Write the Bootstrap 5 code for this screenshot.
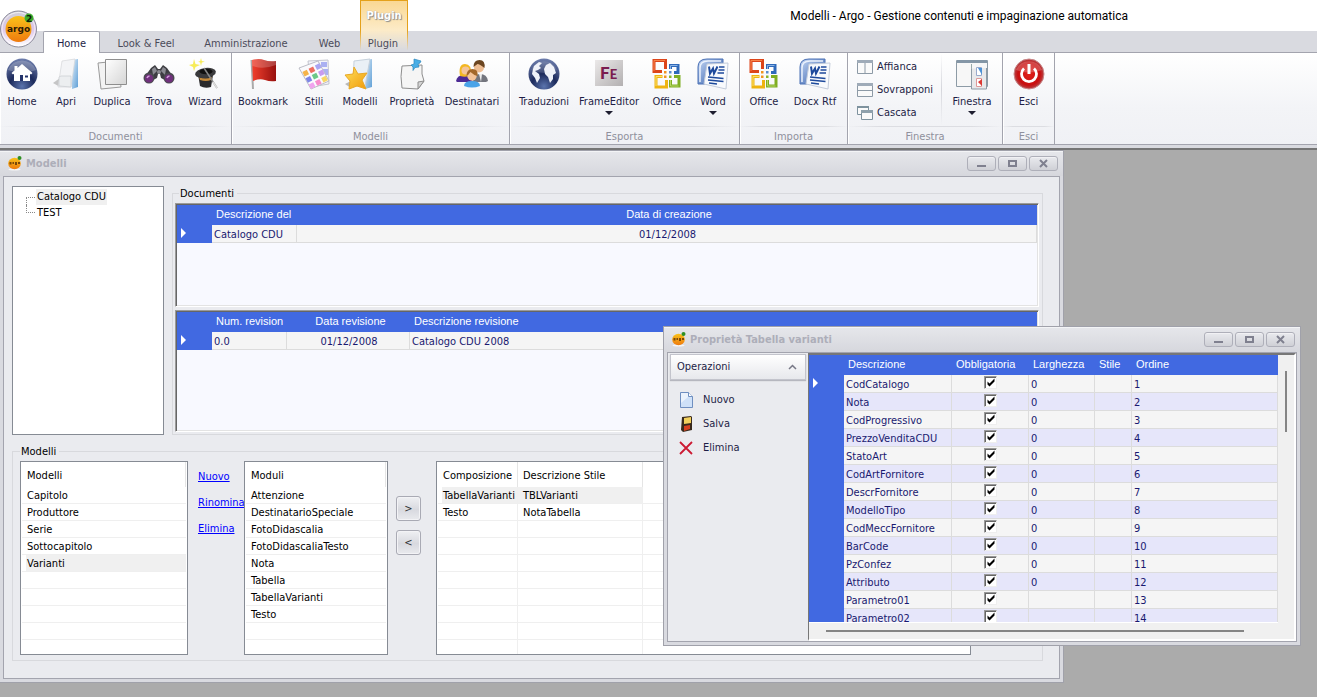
<!DOCTYPE html>
<html lang="it">
<head>
<meta charset="utf-8">
<meta name="viewport" content="width=device-width, initial-scale=1">
<title>Modelli - Argo - Gestione contenuti e impaginazione automatica</title>
<link href="https://cdn.jsdelivr.net/npm/bootstrap@5.3.0/dist/css/bootstrap.min.css" rel="stylesheet">
<style>
  :root { --ui: "DejaVu Sans Condensed", "DejaVu Sans", sans-serif; --line: #a3a4ae; --face: #eaebef; --chrome: #d9dae0; --royal: #4169e1; }
  body { font-family: var(--ui); font-size: 11px; line-height: 14px; color: #000; background: #ababab; }
  svg { display: block; flex: none; }

  /* title bar and tabs */
  .app-title { height: 31px; font-family: Roboto, sans-serif; font-size: 12px; background: #fff; }
  .app-title span { margin-right: 189px; padding-top: 1px; }
  .orb { position: absolute; left: 0; top: 10px; z-index: 3; border: 0; padding: 0; background: none; }
  .context-cap { position: absolute; left: 360px; top: 0; width: 48px; height: 50px; z-index: 1; border: 1px solid #e4a11b; border-bottom: 0; border-image: linear-gradient(#e4a11b 60%, #e4a11b00) 1; background: linear-gradient(#fad893, #fcebc8 60%, #d9dae000); color: #fff; font-weight: bold; text-shadow: 1px 1px 1px #8a8a8a, 0 0 1px #999; padding-top: 8px; }
  .app-tabs { background: #d9dae0; height: 22px; padding-left: 43px; border-bottom: 1px solid var(--line); }
  .app-tabs .nav-link { position: relative; z-index: 2; padding: 5px 0 2px; border-radius: 2px 2px 0 0; color: #4b4b5a; text-align: center; width: 100px; margin-bottom: -1px; border: 1px solid transparent; border-bottom: 0; }
  .app-tabs .nav-link.active { width: 57px; background: #fff; border-color: var(--line); color: #1e1e46; }
  .app-tabs .tab-m { width: 92px; } .app-tabs .tab-l { width: 108px; } .app-tabs .tab-s { width: 59px; } .app-tabs .tab-p { width: 48px; }

  /* ribbon */
  .ribbon { height: 92px; background: linear-gradient(#fff, #f3f4f7 60%, #f0f1f5); border-bottom: 1px solid var(--line); }
  .rb-group { flex: none; border-right: 1px solid var(--line); box-shadow: inset 1px 0 #fff; }
  .rb-group footer { color: #8f909c; height: 18px; line-height: 19px; text-align: center; border-top: 1px solid; border-image: linear-gradient(90deg, #dcdde200, #dcdde2 20%, #dcdde2 80%, #dcdde200) 1; }
  .g-doc { width: 232px; } .g-mod { width: 278px; } .g-exp { width: 230px; } .g-imp { width: 108px; } .g-win { width: 155px; } .g-out { width: 52px; }
  .rb-btn { flex: none; font: inherit; color: #1e1e46; padding: 5px 0 0; width: 46px; border: 0; border-radius: 0; display: flex; flex-direction: column; align-items: center; gap: 5px; white-space: nowrap; }
  .rb-btn.w44 { width: 44px; } .rb-btn.w48 { width: 48px; } .rb-btn.w54 { width: 54px; } .rb-btn.w60 { width: 60px; } .rb-btn.w70 { width: 70px; }
  .rb-btn .caret { border: 4px solid transparent; border-top-color: #1e1e30; border-bottom: 0; margin-top: -3px; }
  .rb-stack { padding-top: 2px; }
  .rb-row { font: inherit; color: #1e1e46; border: 0; padding: 0 0 0 9px; height: 23px; display: flex; align-items: center; gap: 4px; }
  .rb-sep { width: 1px; margin-left: 8px; background: linear-gradient(#d5d6dc00, #d5d6dc, #d5d6dc00); }

  /* desktop and windows */
  .desktop { background: #ababab; border-top: 2px solid #757575; margin-top: 3px; }
  .frame-strip { background: #d9dae0; }
  .mdi { position: absolute; background: var(--chrome); border: 1px solid #a0a1aa; padding: 0 3px 3px; display: flex; flex-direction: column; }
  .mdi-main { left: -1px; top: 0; width: 1065px; height: 533px; }
  .mdi-tool { left: 663px; top: 176px; width: 638px; height: 320px; }
  .mdi-bar { height: 25px; margin: 0 -3px; padding: 0 5px 0 8px; background: linear-gradient(#e6e7eb, #d6d7dd); box-shadow: inset 0 1px #f3f4f6; }
  .mdi-bar h2 { font-size: 11px; font-weight: bold; line-height: 14px; color: #adaeb9; margin: 0; padding-top: 1px; }
  .cap-set { gap: 2px; }
  .cap-btn { width: 29px; height: 15px; padding: 0; border: 1px solid #aeafb9; border-radius: 3px; background: linear-gradient(#e9eaee, #cfd0d6); display: grid; place-items: center; box-shadow: inset 0 1px #f1f1f4; }
  .mdi-body { border: 1px solid var(--line); background: var(--face); min-height: 0; flex: 1; }
  .pad-main { padding: 9px 16px 0 8px; }

  .tree-box { flex: none; width: 152px; height: 249px; border: 1px solid #868b94; background: #fff; padding: 2px 0 0 13px; margin-right: 8px; }
  .tree-box li { height: 16px; line-height: 16px; display: flex; }
  .tree-box li::before { content: ""; width: 9px; height: 8px; margin-right: 1px; border-bottom: 1px dotted #888; border-left: 1px dotted #888; }
  .tree-box li:first-child::before { border-bottom: 0; border-top: 1px dotted #888; margin-top: 8px; }
  .tree-box a { color: #000; text-decoration: none; padding: 0 1px; white-space: nowrap; }
  .tree-box a.on { background: #f0f0f0; }

  .gbox { border: 1px solid #d8d9dd; min-width: 0; }
  .gbox legend { float: none; width: auto; font-size: 11px; line-height: 13px; margin: 0; padding: 1px 3px 0 1px; }
  .gbox-doc { padding: 3px 3px 1px 2px; }
  .gbox-doc legend { margin-left: 4px; }
  .gbox-mod { padding: 3px 71px 5px 7px; margin-top: 9px; }

  .sunk { border: 1px solid; border-color: #9b9b9b #fff #fff #9b9b9b; box-shadow: inset 1px 1px #666, inset -1px -1px #e3e3e3; padding: 1px; background: #f8f9ff; overflow: hidden; }
  .h-docs { height: 104px; } .h-revs { height: 122px; margin-top: 3px; }
  .grid-t { table-layout: fixed; width: 100%; border-collapse: separate; border-spacing: 0; color: #191970; }
  .grid-t th { background: var(--royal); color: #fff; font-family: "Liberation Sans", sans-serif; font-size: 11px; font-weight: normal; line-height: 16px; padding: 0 0 2px 4px; white-space: nowrap; overflow: hidden; }
  .grid-t thead th { height: 20px; }
  .grid-t td { background: #f5f5f5; height: 18px; line-height: 15px; padding: 2px 0 0 2px; border-right: 1px solid #dcdcdc; border-bottom: 1px solid #dcdcdc; white-space: nowrap; overflow: hidden; }
  .grid-t th.mark-cell { width: 35px; padding: 0 0 2px 4px; }
  .mark-cell i { display: block; width: 0; border: 5px solid transparent; border-left-color: #fff; border-right: 0; }
  .grid-t tr:nth-child(even) td { background: #e6e6fa; }
  .c108 { width: 108px; } .c85 { width: 85px; } .c75 { width: 75px; } .c123 { width: 123px; } .c77 { width: 77px; } .c66 { width: 66px; } .c37 { width: 37px; }

  .list-box { border: 1px solid #868b94; background: #fff; height: 194px; padding: 0 1px; overflow: hidden; }
  .list-box table { width: 100%; table-layout: fixed; border-collapse: separate; border-spacing: 0; }
  .list-box th { height: 25px; font-weight: normal; padding: 3px 0 0 5px; border-right: 1px solid #e5e5e5; white-space: nowrap; }
  .list-box td { height: 17px; line-height: 14px; padding: 2px 0 0 5px; border-bottom: 1px solid #efefef; white-space: nowrap; }
  .list-box tr.on td { background: #f0f0f0; }
  .list-box tr.on td:first-child { box-shadow: inset 4px 0 #fff; }
  .l-models { flex: none; width: 168px; } .l-modules { flex: none; width: 144px; }
  .l-comp td { border-right: 1px solid #efefef; }
  .l-comp td:last-child, .l-comp th:last-child { border-right: 0; }
  .c80 { width: 80px; } .c125 { width: 125px; }
  .cmds { flex: none; width: 46px; margin-left: 10px; padding-top: 3px; }
  .cmds a { color: #00f; line-height: 26px; }
  .moves { flex: none; margin: 35px 15px 0 8px; gap: 9px; }
  .move-btn { width: 25px; height: 25px; padding: 0; font-size: 11px; line-height: 14px; border: 1px solid #a9aab4; border-radius: 3px; background: linear-gradient(#eff0f3, #d8d9df 55%, #e9eaee); color: #333; box-shadow: inset 0 0 0 1px #f3f3f6; }

  .side { flex: none; width: 140px; padding: 1px 2px; }
  .side-head { height: 26px; font: inherit; color: #1e1e46; text-align: left; padding: 0 8px 0 6px; border: 1px solid #c3c4cc; border-radius: 0; background: linear-gradient(#fff, #e7e8ec); box-shadow: 0 1px 1px #b6b7bf; }
  .side-cmd { font: inherit; color: #1e1e46; border: 0; padding: 0 0 0 9px; height: 24px; display: flex; align-items: center; gap: 8px; }
  .side-list { padding-top: 8px; }
  .tool-grid { border: 1px solid; border-color: #777 #fff #fff #777; border-width: 2px 2px 2px 1px; background: #f0f0f0; min-width: 0; }
  .tool-view { height: 268px; overflow: hidden; border-bottom: 1px solid #fff; min-width: 0; }
  .vbar { flex: none; width: 16px; padding: 16px 0 0 7px; } .vbar i { display: block; width: 2px; height: 61px; background: #858585; }
  .hbar { padding: 7px 50px 0 17px; } .hbar i { display: block; height: 2px; background: #858585; }
  .grid-t td.tick-cell { padding: 0; vertical-align: top; }
  .tick { appearance: none; display: block; width: 13px; height: 13px; margin: 1px auto 0; border: 1px solid; border-color: #999 #eee #eee #999; box-shadow: inset 1px 1px #666; background: #fff url("data:image/svg+xml,%3Csvg xmlns='http://www.w3.org/2000/svg' width='11' height='11'%3E%3Cpath d='M2.5 4.5v3l2 2 5-5v-3l-5 5z'/%3E%3C/svg%3E") 0 0 no-repeat; }
</style>
</head>
<body class="vh-100 d-flex flex-column overflow-hidden">

<svg width="0" height="0" class="position-absolute" aria-hidden="true">
  <defs>
    <radialGradient id="gNavy" cx=".5" cy=".9" r=".9"><stop offset="0" stop-color="#5b74ad"/><stop offset=".45" stop-color="#1d2b5c"/><stop offset="1" stop-color="#6f7fae"/></radialGradient>
    <linearGradient id="gOrange" x2="0" y2="1"><stop offset="0" stop-color="#f9c21a"/><stop offset="1" stop-color="#ee7a0e"/></linearGradient>
    <linearGradient id="gPage" x2="1" y2="1"><stop offset="0" stop-color="#fff"/><stop offset="1" stop-color="#d5d5d5"/></linearGradient>
    <linearGradient id="gFolder" x2="1" y2="1"><stop offset="0" stop-color="#dcebf8"/><stop offset="1" stop-color="#5f9fd6"/></linearGradient>
    <linearGradient id="gRed" x2="1" y2="0"><stop offset="0" stop-color="#f2402e"/><stop offset="1" stop-color="#97100e"/></linearGradient>
    <linearGradient id="gWord" x2="1" y2="1"><stop offset="0" stop-color="#c4d7f4"/><stop offset="1" stop-color="#2a56a8"/></linearGradient>
    <linearGradient id="gFe" x2="1" y2="1"><stop offset="0" stop-color="#ebe9e9"/><stop offset="1" stop-color="#b3b0b1"/></linearGradient>
    <linearGradient id="gStar" x2="1" y2="1"><stop offset="0" stop-color="#ffe05a"/><stop offset="1" stop-color="#f09a0a"/></linearGradient>
    <radialGradient id="gStop" cx=".5" cy=".5" r=".5"><stop offset="0" stop-color="#e0211b"/><stop offset=".75" stop-color="#c80f10"/><stop offset="1" stop-color="#b5474a"/></radialGradient>
    <linearGradient id="gOrb" x2="0" y2="1"><stop offset="0" stop-color="#cfcfd8"/><stop offset=".5" stop-color="#dcc6ea"/><stop offset="1" stop-color="#fff"/></linearGradient>
    <symbol id="argo" viewBox="0 0 14 15">
      <ellipse cx="6.500" cy="13.500" rx="6" ry="1" fill="#f6f6f6"/>
      <ellipse cx="6.500" cy="7.500" rx="6.300" ry="5.800" fill="url(#gOrange)"/><path d="M1.500 6h2v2.500h-2zM4.500 6H6v2H4.500zM7 6h2v3H7zM10 6h2v2h-2z" fill="#5a3206" opacity=".8"/><circle cx="11.500" cy="2" r="2" fill="#2f8f22"/>
    </symbol>
    <symbol id="office" viewBox="0 0 32 32">
      <g fill="none" stroke-width="3">
        <path d="M11 13.500H3V2.500H14.500V11" stroke="#dc451a"/><path d="M19.500 11V7.500H27V14.500H23" stroke="#2f69ba"/>
        <path d="M11.500 18.500H5V29H15.500V22" stroke="#eeb411"/><path d="M19.500 22V28H28V18.500H23" stroke="#7fae22"/>
      </g>
      <path d="M13 13h2.500v2.500H13zM13 17.500h2.500V20H13z" fill="#f0941e"/><path d="M18 13h2.500v2.500H18z" fill="#5b8ccc"/><path d="M18 17.500h2.500V20H18z" fill="#8bb52c"/>
      <path d="M3 13V2.500h11" fill="none" stroke="#f7844a"/><path d="M5 28V18.500h6" fill="none" stroke="#fbe06a"/><path d="M19.500 11V7.500h7" fill="none" stroke="#8bb4e6"/><path d="M19.500 22v6h8" fill="none" stroke="#b7d868"/>
    </symbol>
    <symbol id="word" viewBox="0 0 32 32">
      <path d="M1 26V9q0-8 9-8h16v5H13L8 26z" fill="url(#gWord)" stroke="#4a70b5"/>
      <path d="M3 24V10q0-7 8-7h13" fill="none" stroke="#eaf1fc" stroke-width="1.500"/>
      <path d="M10 6l21-1-2 26L7 26z" fill="#f8fafd" stroke="#c3ccdb"/>
      <path d="M12 8.500l1 7 3-5 1 5 3.500-7" fill="none" stroke="#1e4a9c" stroke-width="2"/>
      <path d="M22 9h5.500M21.500 12h6M20.500 15h6.500M11 19l15.500 1.500M11 22l15.500 1.500M12 25l8 1" stroke="#1e4a9c" stroke-width="1.600"/>
    </symbol>
  </defs>
</svg>

<header class="position-relative">
  <div class="app-title d-flex align-items-center justify-content-end"><span>Modelli - Argo - Gestione contenuti e impaginazione automatica</span></div>
  <button class="orb" type="button" aria-label="Menu Argo">
    <svg width="38" height="38" viewBox="0 0 38 38">
      <circle cx="18.500" cy="19" r="18" fill="url(#gOrb)" stroke="#8d8d9c"/><circle cx="18.500" cy="19" r="16.500" fill="none" stroke="#fff" opacity=".7"/>
      <circle cx="18.500" cy="19" r="13" fill="url(#gOrange)"/>
      <text x="7" y="22" font-family="DejaVu Sans" font-weight="bold" font-size="9" fill="#2b1a05">argo</text>
      <circle cx="29" cy="8" r="4.500" fill="#3fae2a"/><text x="26" y="11.500" font-family="DejaVu Sans" font-weight="bold" font-size="9" fill="#11200b">2</text>
    </svg>
  </button>
  <div class="context-cap text-center">Plugin</div>
  <nav class="app-tabs nav nav-tabs" aria-label="Schede">
    <a class="nav-link active" href="#" aria-current="page">Home</a>
    <a class="nav-link tab-m" href="#">Look &amp; Feel</a>
    <a class="nav-link tab-l" href="#">Amministrazione</a>
    <a class="nav-link tab-s" href="#">Web</a>
    <a class="nav-link tab-p" href="#">Plugin</a>
  </nav>
</header>

<div class="ribbon d-flex" role="toolbar" aria-label="Home">
  <section class="rb-group g-doc d-flex flex-column">
    <div class="d-flex flex-fill">
      <button type="button" class="btn rb-btn w44"><svg width="32" height="32"><circle cx="16" cy="16" r="15.500" fill="url(#gNavy)"/><path d="M2 12A15 15 0 0 1 30 12Q16 18 2 12z" fill="#fff" opacity=".22"/><path d="M16 6l10.500 9-1.500 1.500-1-.8V23H8v-7.300l-1 .8L5.500 15l3-2.600V8h3v2z" fill="#fff"/><path d="M14 17h3v6h-3z" fill="#24346b"/><path d="M19 17.500h3v2h-3z" fill="#24346b"/></svg><span>Home</span></button>
      <button type="button" class="btn rb-btn w44"><svg width="32" height="32"><path d="M3 25l7-5v9z" fill="#777" opacity=".4"/><path d="M22 2l6-1v28l-6 2z" fill="url(#gFolder)"/><path d="M12 3l13-2-4 28H8z" fill="#f3f4f6" stroke="#d5d7da" stroke-width=".7"/><path d="M9 19l2-1h10v11L9 28z" fill="#eceef0" stroke="#c9cbd0" stroke-width=".7"/></svg><span>Apri</span></button>
      <button type="button" class="btn rb-btn w48"><svg width="32" height="32"><path d="M2 5l20-2 3 26-20 2z" fill="#f3f3f3" stroke="#9a9a9a"/><path d="M9.500 1.500h21v25h-21z" fill="url(#gPage)" stroke="#8e8e8e"/></svg><span>Duplica</span></button>
      <button type="button" class="btn rb-btn"><svg width="32" height="32"><path d="M8 10l4-3 3 4h2l3-4 4 3 5 7-5 6-6-3-1-4h-2l-1 4-6 3-5-6z" fill="#3d3d42"/><path d="M9 11l3-2 2 4-4 4zM23 11l-3-2-2 4 4 4z" fill="#8b8b93"/><circle cx="6" cy="20" r="5.500" fill="#4a4a50"/><circle cx="26" cy="20" r="5.500" fill="#4a4a50"/><circle cx="6" cy="20.500" r="4" fill="#70307c"/><circle cx="26" cy="20.500" r="4" fill="#70307c"/><path d="M4 20a3 3 0 0 1 2.500-2M24 20a3 3 0 0 1 2.500-2" stroke="#d09adb" stroke-width="1.500" fill="none"/><circle cx="16" cy="14" r="2" fill="#8b8b92"/></svg><span>Trova</span></button>
      <button type="button" class="btn rb-btn"><svg width="32" height="32"><path d="M9 16l15 1-2 12q-6 2-11-1z" fill="#2a2a2c"/><path d="M10 19q6 3 13 0l-1 3q-5 2-11 0z" fill="#c58a3a"/><ellipse cx="16.500" cy="15" rx="10.500" ry="5" transform="rotate(-8 16 15)" fill="#3a3a3c"/><ellipse cx="17" cy="13.500" rx="6.500" ry="2.800" fill="#111"/><path d="M15 10l13 20" stroke="#888" stroke-width="1.500"/><path d="M24 24l4 6" stroke="#ddd" stroke-width="1.500"/><path d="M5 1l1.500 5L11 7l-4.500 2L5 13 4 9 0 7l4-1zM12 0l.8 3 3 .8-3 .8L12 8l-.8-3.400-2-.8 2-.8z" fill="#f7ec58"/></svg><span>Wizard</span></button>
    </div>
    <footer>Documenti</footer>
  </section>
  <section class="rb-group g-mod d-flex flex-column">
    <div class="d-flex flex-fill ps-1">
      <button type="button" class="btn rb-btn w54"><svg width="32" height="32"><path d="M4.500 2l1.500 29" stroke="#aaa" stroke-width="2"/><path d="M5 2q7-2 12 0t12 1v20q-6 1-11-1t-12 1z" fill="url(#gRed)"/><path d="M5 2q7-2 12 0t12 1v4Q16 12 5.500 8z" fill="#fff" opacity=".2"/></svg><span>Bookmark</span></button>
      <button type="button" class="btn rb-btn w48"><svg width="32" height="32"><path d="M10 3l20-1 1 24-18 3z" fill="#f3f4fa" stroke="#c4c5cf"/><path d="M16 4h5v5h-5zM23 4h6v5h-6zM25 11h5v6h-5z" fill="#aab0f2"/><path d="M1 10L20 3l11 20-18 8z" fill="#fafafd" stroke="#bcbdc6"/><g transform="rotate(-27 16 17)"><path d="M7 9h5v5H7z" fill="#f5b44a"/><path d="M14 9h5v5h-5z" fill="#ee6d60"/><path d="M21 9h5v5h-5z" fill="#a9a5f2"/><path d="M7 16h5v5H7z" fill="#7d86e6"/><path d="M14 16h5v5h-5z" fill="#6cc888"/><path d="M21 16h5v5h-5z" fill="#c79bef"/><path d="M7 23h5v5H7z" fill="#f0a3ee"/><path d="M14 23h5v5h-5z" fill="#f78ccd"/><path d="M21 23h5v5h-5z" fill="#f8d763"/></g></svg><span>Stili</span></button>
      <button type="button" class="btn rb-btn w44"><svg width="32" height="32"><path d="M22 2l6-1v28l-7 2z" fill="url(#gFolder)"/><path d="M10 3l16-2-5 27H9z" fill="#eaf0f6" stroke="#c6d1dc"/><path d="M1 26l6-3v7z" fill="#777" opacity=".5"/><path d="M10 9l4 7 9-1-5 7 4 9-9-3-8 3 1-8-5-6 8-1z" fill="url(#gStar)" stroke="#e9a825"/></svg><span>Modelli</span></button>
      <button type="button" class="btn rb-btn w60"><svg width="32" height="32"><path d="M6 8l20-1q-1 10 2 16l-6 8-16-1Q4 18 6 8z" fill="#f5f5f5" stroke="#8d8d8d"/><path d="M28 23l-6 8v-7z" fill="#d5d5d5" stroke="#8d8d8d"/><path d="M18 1l7 2-1 2-2 1 1 3-4 .5-2 3v-3.500l-2-2 3-1V3z" fill="#49aee6" stroke="#2b87bd" stroke-width=".7"/></svg><span>Proprietà</span></button>
      <button type="button" class="btn rb-btn w60"><svg width="32" height="32"><path d="M0 23q1-6 8-6t9 7H1z" fill="#4c2a95"/><path d="M17 24q0-8 7-8t8 7l-2 1z" fill="#73757e"/><path d="M23 16h3l-1 8z" fill="#eee"/><path d="M4 18q-2-12 5-12t6 11q-5 3-11 1z" fill="#f3b721"/><circle cx="9.500" cy="12.500" r="4" fill="#f4c49a"/><circle cx="23" cy="9.500" r="5" fill="#eebd93"/><path d="M17.500 9q0-7 6-7t5 8q-5-4-7-4z" fill="#6b4520"/><path d="M8 28q0-5 8-5t8 5q-8 3-16 0z" fill="#4aa3e8"/><circle cx="16" cy="18" r="4.700" fill="#f4c49a"/><path d="M10.500 18q0-7 6-7t5 7q-4-1-7-4-2 3-4 4z" fill="#a4682a"/></svg><span>Destinatari</span></button>
    </div>
    <footer>Modelli</footer>
  </section>
  <section class="rb-group g-exp d-flex flex-column">
    <div class="d-flex flex-fill ps-1">
      <button type="button" class="btn rb-btn w60"><svg width="32" height="32"><circle cx="16" cy="16" r="15.500" fill="url(#gNavy)"/><path d="M6 8l5-4 3 1-3 3 2 2-3 2-3 1 4 3 1 4-3 5-2-5-3-4 1-5z" fill="#eef1f8"/><path d="M18 7l4-2 4 4 2 6-3 2v4l-3 4-2-6-3-3-1-5z" fill="#eef1f8"/><path d="M3 12A14 14 0 0 1 29 12Q16 18 3 12z" fill="#fff" opacity=".13"/></svg><span>Traduzioni</span></button>
      <button type="button" class="btn rb-btn w70"><svg width="32" height="32"><path d="M2 2h28v26H2z" fill="url(#gFe)"/><text x="7" y="21" font-family="Lato" font-weight="900" font-size="17" fill="#7b1c4f">F<tspan font-size="13">E</tspan></text></svg><span>FrameEditor</span><i class="caret"></i></button>
      <button type="button" class="btn rb-btn"><svg width="32" height="32"><use href="#office"/></svg><span>Office</span></button>
      <button type="button" class="btn rb-btn"><svg width="32" height="32"><use href="#word"/></svg><span>Word</span><i class="caret"></i></button>
    </div>
    <footer>Esporta</footer>
  </section>
  <section class="rb-group g-imp d-flex flex-column">
    <div class="d-flex flex-fill">
      <button type="button" class="btn rb-btn w48"><svg width="32" height="32"><use href="#office"/></svg><span>Office</span></button>
      <button type="button" class="btn rb-btn w54"><svg width="32" height="32"><use href="#word"/></svg><span>Docx Rtf</span></button>
    </div>
    <footer>Importa</footer>
  </section>
  <section class="rb-group g-win d-flex flex-column">
    <div class="d-flex flex-fill">
      <div class="rb-stack d-flex flex-column">
        <button type="button" class="btn rb-row"><svg width="16" height="16"><path d="M.5 1.500h15v13H.5z" fill="#fafafa" stroke="#8d9aa6"/><path d="M0 1h16v3H0z" fill="#9fabb8"/><path d="M8 4v10" stroke="#8d9aa6"/></svg>Affianca</button>
        <button type="button" class="btn rb-row"><svg width="16" height="16"><path d="M.5 1.500h15v13H.5z" fill="#fafafa" stroke="#8d9aa6"/><path d="M0 1h16v3H0z" fill="#9fabb8"/><path d="M1 8.500h14" stroke="#8d9aa6"/></svg>Sovrapponi</button>
        <button type="button" class="btn rb-row"><svg width="16" height="16"><path d="M.5 1.500h11v8H.5z" fill="#fafafa" stroke="#7e929e"/><path d="M0 1h12v2H0z" fill="#7e929e"/><path d="M4.500 5.500h11v9h-11z" fill="#fafafa" stroke="#7e929e"/><path d="M4 5h12v3H4z" fill="#8fa1ac"/></svg>Cascata</button>
      </div>
      <span class="rb-sep"></span>
      <button type="button" class="btn rb-btn w60"><svg width="32" height="32"><path d="M.5 2.500h31v26H.5z" fill="#f7f7f7" stroke="#8d9ba6"/><path d="M1 2h30v3H1z" fill="#8496a6"/><path d="M15.500 6v23" stroke="#9aa"/><path d="M15.500 10.500V31h15V10" fill="#e8e9eb" stroke="#8d9ba6"/><path d="M20.500 9.500h5v8h-5z" fill="#fff" stroke="#9ac"/><path d="M22 10h4v7z" fill="#4d92d6"/><path d="M20.500 20.500h5v8h-5z" fill="#fff" stroke="#d99"/><path d="M22 24l4-3v7z" fill="#dc3a35"/></svg><span>Finestra</span><i class="caret"></i></button>
    </div>
    <footer>Finestra</footer>
  </section>
  <section class="rb-group g-out d-flex flex-column">
    <div class="d-flex flex-fill justify-content-center">
      <button type="button" class="btn rb-btn"><svg width="32" height="32"><circle cx="16" cy="16" r="15" fill="url(#gStop)" stroke="#c9888a"/><path d="M3 12A14 14 0 0 1 29 12Q16 17 3 12z" fill="#fff" opacity=".22"/><path d="M11 10.500a7.500 7.500 0 1 0 10 0" fill="none" stroke="#fff" stroke-width="2.800"/><path d="M16 6v10" stroke="#fff" stroke-width="3"/></svg><span>Esci</span></button>
    </div>
    <footer>Esci</footer>
  </section>
</div>

<main class="frame-strip flex-fill d-flex">
<div class="desktop position-relative overflow-hidden flex-fill">

  <section class="mdi mdi-main" aria-label="Modelli">
    <div class="mdi-bar d-flex align-items-center">
      <svg width="14" height="15" class="me-1"><use href="#argo"/></svg>
      <h2 class="flex-fill">Modelli</h2>
      <div class="d-flex cap-set">
        <button class="cap-btn" type="button" aria-label="Riduci a icona"><svg width="11" height="9"><path d="M1 6h9v2H1z" fill="#7f808f"/></svg></button>
        <button class="cap-btn" type="button" aria-label="Ingrandisci"><svg width="11" height="9"><path d="M2 2h7v5H2z" fill="none" stroke="#7f808f" stroke-width="2"/></svg></button>
        <button class="cap-btn" type="button" aria-label="Chiudi"><svg width="11" height="9"><path d="M2 1l7 7M9 1L2 8" stroke="#7f808f" stroke-width="2"/></svg></button>
      </div>
    </div>
    <div class="mdi-body pad-main">
      <div class="d-flex">
        <ul class="tree-box list-unstyled mb-0">
          <li><a class="on" href="#">Catalogo CDU</a></li>
          <li><a href="#">TEST</a></li>
        </ul>
        <fieldset class="gbox gbox-doc flex-fill">
          <legend>Documenti</legend>
          <div class="sunk h-docs">
            <table class="grid-t">
              <thead><tr><th class="mark-cell"></th><th class="c85">Descrizione del</th><th class="text-center">Data di creazione</th></tr></thead>
              <tbody><tr><th class="mark-cell"><i></i></th><td>Catalogo CDU</td><td class="text-center">01/12/2008</td></tr></tbody>
            </table>
          </div>
          <div class="sunk h-revs">
            <table class="grid-t">
              <thead><tr><th class="mark-cell"></th><th class="c75">Num. revision</th><th class="c123 text-center">Data revisione</th><th>Descrizione revisione</th></tr></thead>
              <tbody><tr><th class="mark-cell"><i></i></th><td>0.0</td><td class="text-center">01/12/2008</td><td>Catalogo CDU 2008</td></tr></tbody>
            </table>
          </div>
        </fieldset>
      </div>
      <fieldset class="gbox gbox-mod">
        <legend>Modelli</legend>
        <div class="d-flex">
          <div class="list-box l-models">
            <table>
              <thead><tr><th>Modelli</th></tr></thead>
              <tbody><tr><td>Capitolo</td></tr><tr><td>Produttore</td></tr><tr><td>Serie</td></tr><tr><td>Sottocapitolo</td></tr><tr class="on"><td>Varianti</td></tr><tr><td></td></tr><tr><td></td></tr><tr><td></td></tr><tr><td></td></tr></tbody>
            </table>
          </div>
          <div class="cmds d-flex flex-column">
            <a href="#">Nuovo</a><a href="#">Rinomina</a><a href="#">Elimina</a>
          </div>
          <div class="list-box l-modules">
            <table>
              <thead><tr><th>Moduli</th></tr></thead>
              <tbody><tr><td>Attenzione</td></tr><tr><td>DestinatarioSpeciale</td></tr><tr><td>FotoDidascalia</td></tr><tr><td>FotoDidascaliaTesto</td></tr><tr><td>Nota</td></tr><tr><td>Tabella</td></tr><tr><td>TabellaVarianti</td></tr><tr><td>Testo</td></tr><tr><td></td></tr></tbody>
            </table>
          </div>
          <div class="moves d-flex flex-column">
            <button class="move-btn" type="button" aria-label="Aggiungi">&gt;</button>
            <button class="move-btn" type="button" aria-label="Togli">&lt;</button>
          </div>
          <div class="list-box l-comp flex-fill">
            <table>
              <thead><tr><th class="c80">Composizione</th><th class="c125">Descrizione Stile</th><th></th></tr></thead>
              <tbody>
                <tr class="on"><td>TabellaVarianti</td><td>TBLVarianti</td><td class="bg-white"></td></tr>
                <tr><td>Testo</td><td>NotaTabella</td><td></td></tr>
                <tr><td></td><td></td><td></td></tr><tr><td></td><td></td><td></td></tr><tr><td></td><td></td><td></td></tr><tr><td></td><td></td><td></td></tr><tr><td></td><td></td><td></td></tr><tr><td></td><td></td><td></td></tr><tr><td></td><td></td><td></td></tr><tr><td></td><td></td><td></td></tr>
              </tbody>
            </table>
          </div>
        </div>
      </fieldset>
    </div>
  </section>

  <section class="mdi mdi-tool" aria-label="Proprietà Tabella varianti">
    <div class="mdi-bar d-flex align-items-center">
      <svg width="14" height="15" class="me-1"><use href="#argo"/></svg>
      <h2 class="flex-fill">Proprietà Tabella varianti</h2>
      <div class="d-flex cap-set">
        <button class="cap-btn" type="button" aria-label="Riduci a icona"><svg width="11" height="9"><path d="M1 6h9v2H1z" fill="#7f808f"/></svg></button>
        <button class="cap-btn" type="button" aria-label="Ingrandisci"><svg width="11" height="9"><path d="M2 2h7v5H2z" fill="none" stroke="#7f808f" stroke-width="2"/></svg></button>
        <button class="cap-btn" type="button" aria-label="Chiudi"><svg width="11" height="9"><path d="M2 1l7 7M9 1L2 8" stroke="#7f808f" stroke-width="2"/></svg></button>
      </div>
    </div>
    <div class="mdi-body d-flex">
      <aside class="side">
        <button class="btn side-head w-100 d-flex align-items-center justify-content-between" type="button" aria-expanded="true">Operazioni <svg width="9" height="6"><path d="M1 5l3.500-3.500L8 5" fill="none" stroke="#777886" stroke-width="1.500"/></svg></button>
        <div class="side-list">
          <button class="btn side-cmd" type="button"><svg width="16" height="16"><path d="M1.500.5h8l4 4v11h-12z" fill="#cfe1f8" stroke="#6f8fc0"/><path d="M9.500.5v4h4" fill="#fff" stroke="#6f8fc0"/><path d="M2 1h7v4l-7 6z" fill="#fff" opacity=".6"/></svg>Nuovo</button>
          <button class="btn side-cmd" type="button"><svg width="16" height="16"><path d="M3 1l9-1 1 1v13l-9 2-2-2z" fill="#3a2a1c"/><path d="M5 2l7-1v6l-7 1z" fill="#f3d05c"/><path d="M5 10l6-1v4l-6 2z" fill="#d8401f"/></svg>Salva</button>
          <button class="btn side-cmd" type="button"><svg width="16" height="16"><path d="M1 2l12 12M13 2L1 14" stroke="#cc1a33" stroke-width="1.800"/></svg>Elimina</button>
        </div>
      </aside>
      <div class="tool-grid flex-fill">
        <div class="d-flex">
          <div class="tool-view flex-fill">
            <table class="grid-t">
              <thead><tr><th class="mark-cell"></th><th class="c108">Descrizione</th><th class="c77">Obbligatoria</th><th class="c66">Larghezza</th><th class="c37">Stile</th><th>Ordine</th></tr></thead>
              <tbody id="varianti"></tbody>
            </table>
          </div>
          <div class="vbar"><i></i></div>
        </div>
        <div class="hbar"><i></i></div>
      </div>
    </div>
  </section>
</div>
</main>

<script src="https://cdn.jsdelivr.net/npm/bootstrap@5.3.0/dist/js/bootstrap.bundle.min.js"></script>
<script>
  const fields = ["CodCatalogo", "Nota", "CodProgressivo", "PrezzoVenditaCDU", "StatoArt", "CodArtFornitore", "DescrFornitore", "ModelloTipo", "CodMeccFornitore", "BarCode", "PzConfez", "Attributo", "Parametro01", "Parametro02"];
  document.getElementById("varianti").innerHTML = fields.map((name, i) =>
    `<tr><th class="mark-cell">${i ? "" : "<i></i>"}</th><td>${name}</td><td class="tick-cell"><input class="tick" type="checkbox" checked aria-label="${name} obbligatoria"></td><td>${i < 12 ? 0 : ""}</td><td></td><td>${i + 1}</td></tr>`).join("");
</script>
</body>
</html>
